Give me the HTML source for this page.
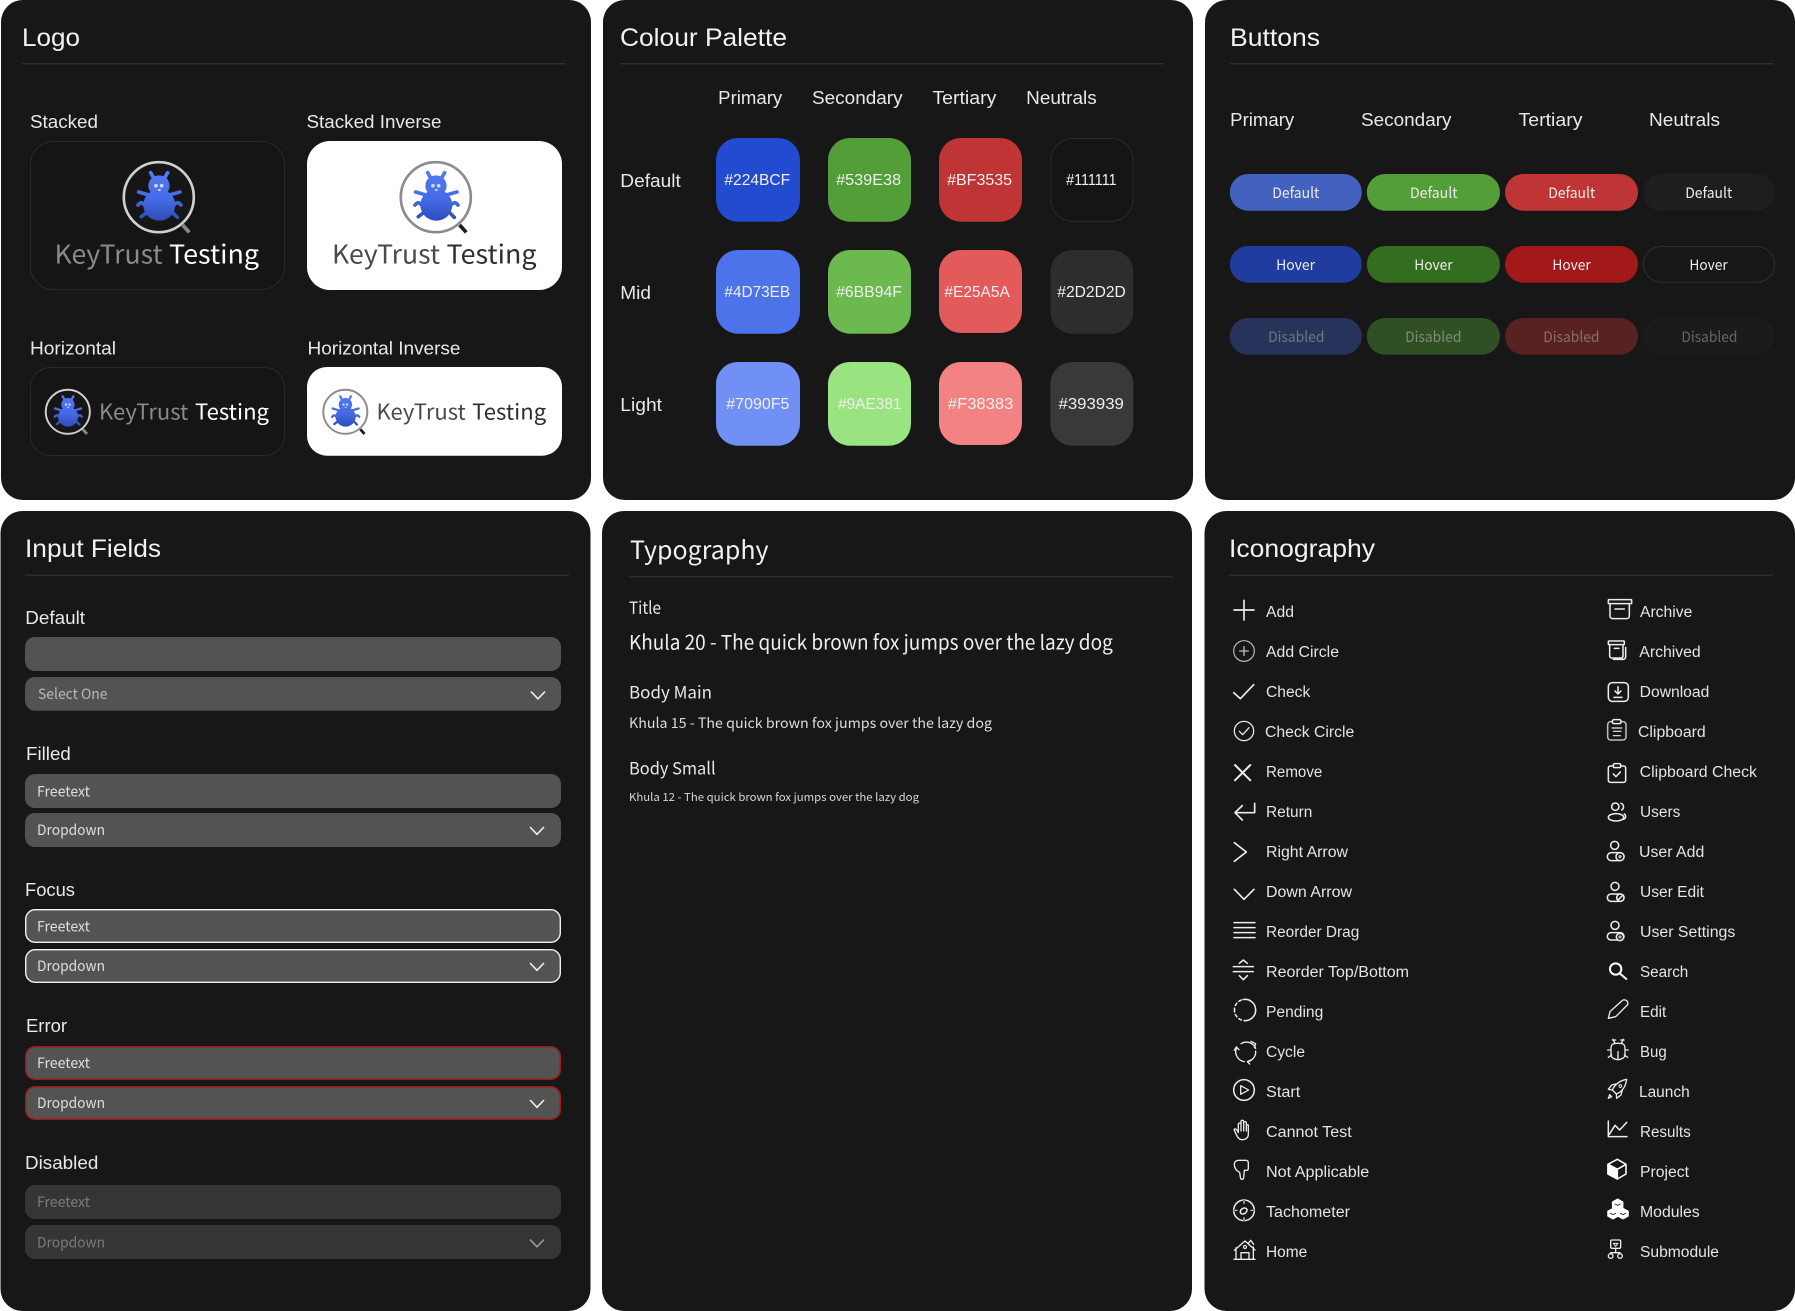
<!DOCTYPE html>
<html lang="en"><head><meta charset="utf-8"><title>KeyTrust Testing Style Guide</title>
<style>
html,body{margin:0;padding:0;background:#fff}
svg{display:block}
text{font-family:"Liberation Sans",sans-serif;fill:#ececec}
.h{font-size:25px;fill:#f2f2f2}
.l{font-size:18px;fill:#e8e8e8}
.sw{font-size:15.5px;fill:#f0f0f0}
.k{font-family:"Noto Sans CJK JP","Liberation Sans",sans-serif}
.b{font-size:14.5px;text-anchor:start}
.f{font-size:14.5px;fill:#dedede}
.d{fill:#7b7b7b}
.n{font-size:15.5px;fill:#e4e4e4}
.ic{fill:none;stroke:#ececec;stroke-width:4.6;stroke-linecap:round;stroke-linejoin:round}
.ch{fill:none;stroke:#eee;stroke-width:1.6}
</style></head><body>
<svg xmlns="http://www.w3.org/2000/svg" width="1795" height="1311" viewBox="0 0 1795 1311">
<defs>
<linearGradient id="g" gradientUnits="userSpaceOnUse" x1="0" y1="70" x2="0" y2="212"><stop offset="0" stop-color="#5079f2"/><stop offset=".55" stop-color="#466ae6"/><stop offset="1" stop-color="#2d4db8"/></linearGradient>
<g id="bug">
<ellipse cx="177" cy="107" rx="32" ry="31" fill="url(#g)"/><ellipse cx="178" cy="165" rx="48" ry="47" fill="url(#g)"/>
<g fill="none" stroke="url(#g)" stroke-width="11" stroke-linecap="round">
<path d="M147 135L116 126M208 135L240 126M132 163C125 155 120 158 114 165M224 163C232 155 238 158 243 165M140 188L124 200M218 188L232 202M163 90C160 80 156 75 152 68M192 90C196 80 198 75 203 68"/></g>
<circle cx="168" cy="107" r="5.5" fill="#cfd8f5"/><circle cx="185" cy="107" r="5.5" fill="#cfd8f5"/><ellipse cx="178" cy="120" rx="4.5" ry="3" fill="#cfd8f5"/>
</g>
</defs>
<rect width="1795" height="1311" fill="#fff"/>
<rect x="1" y="0" width="590" height="500" rx="22" fill="#171717"/>
<rect x="603" y="0" width="590" height="500" rx="22" fill="#171717"/>
<rect x="1205" y="0" width="590" height="500" rx="22" fill="#171717"/>
<rect x="0.5" y="511" width="590" height="800" rx="22" fill="#171717"/>
<rect x="602" y="511" width="590" height="800" rx="22" fill="#171717"/>
<rect x="1204.5" y="511" width="590.5" height="800" rx="22" fill="#171717"/>

<!-- dividers -->
<g fill="#2d2d2d"><rect x="22" y="63" width="544" height="1.5"/><rect x="620" y="63" width="544" height="1.5"/><rect x="1230" y="63" width="544" height="1.5"/><rect x="25" y="574.5" width="544" height="1.5"/><rect x="629" y="576" width="544" height="1.5"/><rect x="1229" y="574.5" width="544" height="1.5"/></g>

<!-- titles -->
<text class="h" x="22" y="46" textLength="58" lengthAdjust="spacingAndGlyphs">Logo</text>
<text class="h" x="620" y="46" textLength="167" lengthAdjust="spacingAndGlyphs">Colour Palette</text>
<text class="h" x="1230" y="46" textLength="90" lengthAdjust="spacingAndGlyphs">Buttons</text>
<text class="h" x="25" y="557" textLength="136" lengthAdjust="spacingAndGlyphs">Input Fields</text>
<text class="h k" x="630" y="559" textLength="138.5" lengthAdjust="spacingAndGlyphs">Typography</text>
<text class="h" x="1229" y="557" textLength="146" lengthAdjust="spacingAndGlyphs">Iconography</text>

<!-- logo panel -->
<text class="l" x="30" y="128" textLength="68" lengthAdjust="spacingAndGlyphs">Stacked</text>
<text class="l" x="306.5" y="128" textLength="135" lengthAdjust="spacingAndGlyphs">Stacked Inverse</text>
<text class="l" x="30" y="354.4" textLength="86" lengthAdjust="spacingAndGlyphs">Horizontal</text>
<text class="l" x="307.5" y="354.4" textLength="153" lengthAdjust="spacingAndGlyphs">Horizontal Inverse</text>
<rect x="30.5" y="141.5" width="254" height="148" rx="23" fill="#151515" stroke="#292929"/>
<rect x="307" y="141" width="255" height="149" rx="23" fill="#fff"/>
<rect x="30.5" y="367.5" width="254" height="88" rx="20" fill="#151515" stroke="#292929"/>
<rect x="307" y="367" width="255" height="88.7" rx="20" fill="#fff"/>

<g transform="translate(158.8 197.2) scale(.3333) translate(-176.5 -141.5)"><path d="M248 225L268 247" stroke="#8a8a8a" stroke-width="11" fill="none"/><circle cx="176.5" cy="141.5" r="105" fill="#161616" stroke="#cfcfcf" stroke-width="8"/><use href="#bug"/></g>
<g transform="translate(435.8 197.2) scale(.3333) translate(-176.5 -141.5)"><path d="M248 225L268 247" stroke="#1d1d1d" stroke-width="11" fill="none"/><circle cx="176.5" cy="141.5" r="105" fill="#fff" stroke="#8c8c8c" stroke-width="8"/><use href="#bug"/></g>
<g transform="translate(67.8 411.8) scale(.21) translate(-176.5 -141.5)"><path d="M248 225L268 247" stroke="#8a8a8a" stroke-width="13" fill="none"/><circle cx="176.5" cy="141.5" r="105" fill="#161616" stroke="#cfcfcf" stroke-width="9"/><use href="#bug"/></g>
<g transform="translate(345.3 411.8) scale(.21) translate(-176.5 -141.5)"><path d="M248 225L268 247" stroke="#1d1d1d" stroke-width="13" fill="none"/><circle cx="176.5" cy="141.5" r="105" fill="#fff" stroke="#8c8c8c" stroke-width="9"/><use href="#bug"/></g>

<g>
<text class="k" x="54.5" y="263.5" font-size="26" style="fill:#8a8a8a" textLength="108" lengthAdjust="spacingAndGlyphs">KeyTrust</text>
<text class="k" x="169" y="263.5" font-size="26" style="fill:#fff" textLength="90" lengthAdjust="spacingAndGlyphs">Testing</text>
<text class="k" x="332" y="263.5" font-size="26" style="fill:#4a4a4a" textLength="108" lengthAdjust="spacingAndGlyphs">KeyTrust</text>
<text class="k" x="446.5" y="263.5" font-size="26" style="fill:#2e2e2e" textLength="90" lengthAdjust="spacingAndGlyphs">Testing</text>
<text class="k" x="99" y="419.3" font-size="21.5" style="fill:#8a8a8a" textLength="89.3" lengthAdjust="spacingAndGlyphs">KeyTrust</text>
<text class="k" x="195" y="419.3" font-size="21.5" style="fill:#fff" textLength="74" lengthAdjust="spacingAndGlyphs">Testing</text>
<text class="k" x="376.5" y="419.3" font-size="21.5" style="fill:#4a4a4a" textLength="89.3" lengthAdjust="spacingAndGlyphs">KeyTrust</text>
<text class="k" x="472.2" y="419.3" font-size="21.5" style="fill:#2e2e2e" textLength="74" lengthAdjust="spacingAndGlyphs">Testing</text>
</g>

<!-- palette -->
<text class="l" x="718.2" y="104" textLength="64" lengthAdjust="spacingAndGlyphs">Primary</text>
<text class="l" x="812" y="104" textLength="90.6" lengthAdjust="spacingAndGlyphs">Secondary</text>
<text class="l" x="932.4" y="104" textLength="64" lengthAdjust="spacingAndGlyphs">Tertiary</text>
<text class="l" x="1026.2" y="104" textLength="70.5" lengthAdjust="spacingAndGlyphs">Neutrals</text>
<text class="l" x="620.3" y="187" textLength="60.5" lengthAdjust="spacingAndGlyphs">Default</text>
<text class="l" x="620.3" y="299" textLength="30.7" lengthAdjust="spacingAndGlyphs">Mid</text>
<text class="l" x="620.3" y="411" textLength="41.7" lengthAdjust="spacingAndGlyphs">Light</text>

<rect x="716" y="138" width="84" height="83.7" rx="22" fill="#224BCF"/>
<rect x="828" y="138" width="83" height="83.7" rx="22" fill="#539E38"/>
<rect x="939" y="138" width="83" height="83.7" rx="22" fill="#BF3535"/>
<rect x="1050.9" y="138.5" width="82" height="82.7" rx="22" fill="#151515" stroke="#2a2a2a"/>
<rect x="716" y="250" width="84" height="83.7" rx="22" fill="#4D73EB"/>
<rect x="828" y="250" width="83" height="83.7" rx="22" fill="#6BB94F"/>
<rect x="939" y="250" width="83" height="83" rx="22" fill="#E25A5A"/>
<rect x="1050.4" y="250" width="83" height="83.7" rx="22" fill="#2D2D2D"/>
<rect x="716" y="362" width="84" height="83.7" rx="22" fill="#7090F5"/>
<rect x="828" y="362" width="83" height="83.7" rx="22" fill="#9AE381"/>
<rect x="939" y="362" width="83" height="83" rx="22" fill="#F38383"/>
<rect x="1050.4" y="362" width="83" height="83.7" rx="22" fill="#393939"/>

<text class="sw" x="724.4" y="185" textLength="65.8" lengthAdjust="spacingAndGlyphs">#224BCF</text>
<text class="sw" x="836.1" y="185" textLength="65" lengthAdjust="spacingAndGlyphs">#539E38</text>
<text class="sw" x="947.1" y="185" textLength="65" lengthAdjust="spacingAndGlyphs">#BF3535</text>
<text class="sw" x="1066.1" y="185" textLength="50.5" lengthAdjust="spacingAndGlyphs">#111111</text>
<text class="sw" x="724.4" y="297" textLength="65.8" lengthAdjust="spacingAndGlyphs">#4D73EB</text>
<text class="sw" x="836.1" y="297" textLength="65.8" lengthAdjust="spacingAndGlyphs">#6BB94F</text>
<text class="sw" x="944.4" y="297" textLength="65.4" lengthAdjust="spacingAndGlyphs">#E25A5A</text>
<text class="sw" x="1057.3" y="297" textLength="68.5" lengthAdjust="spacingAndGlyphs">#2D2D2D</text>
<text class="sw" x="726.3" y="409" textLength="63.1" lengthAdjust="spacingAndGlyphs">#7090F5</text>
<text class="sw" x="838" y="409" textLength="63.5" lengthAdjust="spacingAndGlyphs">#9AE381</text>
<text class="sw" x="947.9" y="409" textLength="65.4" lengthAdjust="spacingAndGlyphs">#F38383</text>
<text class="sw" x="1058.5" y="409" textLength="65.4" lengthAdjust="spacingAndGlyphs">#393939</text>

<!-- buttons -->
<text class="l" x="1230.2" y="126" textLength="64" lengthAdjust="spacingAndGlyphs">Primary</text>
<text class="l" x="1361" y="126" textLength="90.5" lengthAdjust="spacingAndGlyphs">Secondary</text>
<text class="l" x="1518.5" y="126" textLength="64" lengthAdjust="spacingAndGlyphs">Tertiary</text>
<text class="l" x="1649" y="126" textLength="71" lengthAdjust="spacingAndGlyphs">Neutrals</text>

<rect x="1229.8" y="174" width="132" height="36.7" rx="18.3" fill="#4361BF"/>
<rect x="1366.8" y="174" width="133.2" height="36.7" rx="18.3" fill="#539E38"/>
<rect x="1505" y="174" width="133" height="36.7" rx="18.3" fill="#BF3535"/>
<rect x="1643" y="174" width="132" height="36.7" rx="18.3" fill="#1E1E1E"/>
<rect x="1229.8" y="246" width="132" height="36.7" rx="18.3" fill="#1F3C9E"/>
<rect x="1366.8" y="246" width="133.2" height="36.7" rx="18.3" fill="#336E20"/>
<rect x="1505" y="246" width="133" height="36.7" rx="18.3" fill="#A31818"/>
<rect x="1643.5" y="246.5" width="131" height="35.7" rx="17.8" fill="none" stroke="#2f2f2f"/>
<rect x="1229.8" y="318" width="132" height="36.7" rx="18.3" fill="#27335B"/>
<rect x="1366.8" y="318" width="133.2" height="36.7" rx="18.3" fill="#2F4F25"/>
<rect x="1505" y="318" width="133" height="36.7" rx="18.3" fill="#582222"/>
<rect x="1643" y="318" width="132" height="36.7" rx="18.3" fill="#1B1B1B"/>

<g>
<text class="b k" x="1272.3" y="198" textLength="47" lengthAdjust="spacingAndGlyphs">Default</text>
<text class="b k" x="1410" y="198" textLength="47.5" lengthAdjust="spacingAndGlyphs">Default</text>
<text class="b k" x="1548.2" y="198" textLength="47" lengthAdjust="spacingAndGlyphs">Default</text>
<text class="b k" x="1685.2" y="198" textLength="47" lengthAdjust="spacingAndGlyphs">Default</text>
<text class="b k" x="1276.1" y="270" textLength="39" lengthAdjust="spacingAndGlyphs">Hover</text>
<text class="b k" x="1414.3" y="270" textLength="38.3" lengthAdjust="spacingAndGlyphs">Hover</text>
<text class="b k" x="1552.4" y="270" textLength="38.3" lengthAdjust="spacingAndGlyphs">Hover</text>
<text class="b k" x="1689.4" y="270" textLength="38.3" lengthAdjust="spacingAndGlyphs">Hover</text>
<text class="b k" x="1268.1" y="342" style="fill:#72767f" textLength="56.3" lengthAdjust="spacingAndGlyphs">Disabled</text>
<text class="b k" x="1405.1" y="342" style="fill:#7d8c78" textLength="56.3" lengthAdjust="spacingAndGlyphs">Disabled</text>
<text class="b k" x="1543.2" y="342" style="fill:#8a6d6d" textLength="56.3" lengthAdjust="spacingAndGlyphs">Disabled</text>
<text class="b k" x="1681.4" y="342" style="fill:#666" textLength="56" lengthAdjust="spacingAndGlyphs">Disabled</text>
</g>

<!-- inputs -->
<text class="l" x="25.3" y="624" textLength="59.7" lengthAdjust="spacingAndGlyphs">Default</text>
<text class="l" x="26" y="760" textLength="44.8" lengthAdjust="spacingAndGlyphs">Filled</text>
<text class="l" x="25" y="896.2" textLength="50" lengthAdjust="spacingAndGlyphs">Focus</text>
<text class="l" x="26" y="1032" textLength="41" lengthAdjust="spacingAndGlyphs">Error</text>
<text class="l" x="25" y="1169" textLength="73.3" lengthAdjust="spacingAndGlyphs">Disabled</text>

<g fill="#535353">
<rect x="25" y="637" width="536" height="34" rx="10"/>
<rect x="25" y="677" width="536" height="33.7" rx="10"/>
<rect x="25" y="774" width="536" height="34" rx="10"/>
<rect x="25" y="813" width="536" height="34" rx="10"/>
<rect x="25.7" y="909.7" width="534.6" height="32.6" rx="9.5" stroke="#f0f0f0" stroke-width="1.4"/>
<rect x="25.7" y="949.7" width="534.6" height="32.6" rx="9.5" stroke="#f0f0f0" stroke-width="1.4"/>
<rect x="25.7" y="1046.7" width="534.6" height="32.6" rx="9.5" stroke="#a31818" stroke-width="1.4"/>
<rect x="25.7" y="1086.7" width="534.6" height="32.6" rx="9.5" stroke="#a31818" stroke-width="1.4"/>
</g>
<rect x="25" y="1185" width="536" height="34" rx="10" fill="#353535"/>
<rect x="25" y="1225" width="536" height="34" rx="10" fill="#353535"/>

<text class="f k" x="38" y="699" style="fill:#b8b8b8" textLength="69.5" lengthAdjust="spacingAndGlyphs">Select One</text>
<text class="f k" x="37" y="796.5" textLength="53" lengthAdjust="spacingAndGlyphs">Freetext</text>
<text class="f k" x="37" y="835" textLength="68" lengthAdjust="spacingAndGlyphs">Dropdown</text>
<text class="f k" x="37" y="931.5" textLength="53" lengthAdjust="spacingAndGlyphs">Freetext</text>
<text class="f k" x="37" y="971" textLength="68" lengthAdjust="spacingAndGlyphs">Dropdown</text>
<text class="f k" x="37" y="1068" textLength="53" lengthAdjust="spacingAndGlyphs">Freetext</text>
<text class="f k" x="37" y="1108" textLength="68" lengthAdjust="spacingAndGlyphs">Dropdown</text>
<text class="f k d" x="37" y="1207" style="fill:#7b7b7b" textLength="53" lengthAdjust="spacingAndGlyphs">Freetext</text>
<text class="f k d" x="37" y="1247.5" style="fill:#7b7b7b" textLength="68" lengthAdjust="spacingAndGlyphs">Dropdown</text>

<path class="ch" d="M531 691.6L538 698.8L545 691.6"/>
<path class="ch" d="M530 827L537 834.3L544 827"/>
<path class="ch" d="M530 963L537 970.3L544 963"/>
<path class="ch" d="M530 1100L537 1107.3L544 1100"/>
<path class="ch" style="stroke:#9a9a9a" d="M530 1239.5L537 1246.8L544 1239.5"/>

<!-- typography -->
<text class="k" x="629" y="614" font-size="17" style="fill:#e8e8e8" textLength="32" lengthAdjust="spacingAndGlyphs">Title</text>
<text class="k" x="629" y="649.5" font-size="20" style="fill:#eee" textLength="483.8" lengthAdjust="spacingAndGlyphs">Khula 20 - The quick brown fox jumps over the lazy dog</text>
<text class="k" x="629" y="698.3" font-size="17" style="fill:#e8e8e8" textLength="83" lengthAdjust="spacingAndGlyphs">Body Main</text>
<text class="k" x="629" y="728" font-size="14" style="fill:#dcdcdc" textLength="363" lengthAdjust="spacingAndGlyphs">Khula 15 - The quick brown fox jumps over the lazy dog</text>
<text class="k" x="629" y="774.3" font-size="17" style="fill:#e8e8e8" textLength="86.6" lengthAdjust="spacingAndGlyphs">Body Small</text>
<text class="k" x="629" y="801" font-size="11" style="fill:#d8d8d8" textLength="290" lengthAdjust="spacingAndGlyphs">Khula 12 - The quick brown fox jumps over the lazy dog</text>

<!-- icon labels left -->
<g>
<text class="n" x="1266" y="616.8" textLength="28" lengthAdjust="spacingAndGlyphs">Add</text>
<text class="n" x="1266" y="656.8" textLength="73" lengthAdjust="spacingAndGlyphs">Add Circle</text>
<text class="n" x="1266" y="696.8" textLength="44.3" lengthAdjust="spacingAndGlyphs">Check</text>
<text class="n" x="1265" y="736.8" textLength="89.3" lengthAdjust="spacingAndGlyphs">Check Circle</text>
<text class="n" x="1266" y="776.8" textLength="56.3" lengthAdjust="spacingAndGlyphs">Remove</text>
<text class="n" x="1266" y="816.8" textLength="46.3" lengthAdjust="spacingAndGlyphs">Return</text>
<text class="n" x="1266" y="856.8" textLength="82" lengthAdjust="spacingAndGlyphs">Right Arrow</text>
<text class="n" x="1266" y="896.8" textLength="86" lengthAdjust="spacingAndGlyphs">Down Arrow</text>
<text class="n" x="1266" y="936.8" textLength="93.3" lengthAdjust="spacingAndGlyphs">Reorder Drag</text>
<text class="n" x="1266" y="976.8" textLength="143" lengthAdjust="spacingAndGlyphs">Reorder Top/Bottom</text>
<text class="n" x="1266" y="1016.8" textLength="57.3" lengthAdjust="spacingAndGlyphs">Pending</text>
<text class="n" x="1266" y="1056.8" textLength="39" lengthAdjust="spacingAndGlyphs">Cycle</text>
<text class="n" x="1266" y="1096.8" textLength="34.3" lengthAdjust="spacingAndGlyphs">Start</text>
<text class="n" x="1266" y="1136.8" textLength="85.7" lengthAdjust="spacingAndGlyphs">Cannot Test</text>
<text class="n" x="1266" y="1176.8" textLength="103.3" lengthAdjust="spacingAndGlyphs">Not Applicable</text>
<text class="n" x="1266" y="1216.8" textLength="84" lengthAdjust="spacingAndGlyphs">Tachometer</text>
<text class="n" x="1266" y="1256.8" textLength="41.3" lengthAdjust="spacingAndGlyphs">Home</text>
</g>
<!-- icon labels right -->
<g>
<text class="n" x="1640" y="616.8" textLength="52.3" lengthAdjust="spacingAndGlyphs">Archive</text>
<text class="n" x="1639.3" y="656.8" textLength="61.4" lengthAdjust="spacingAndGlyphs">Archived</text>
<text class="n" x="1639.7" y="696.8" textLength="69.6" lengthAdjust="spacingAndGlyphs">Download</text>
<text class="n" x="1638" y="736.8" textLength="67.7" lengthAdjust="spacingAndGlyphs">Clipboard</text>
<text class="n" x="1639.7" y="776.8" textLength="117.3" lengthAdjust="spacingAndGlyphs">Clipboard Check</text>
<text class="n" x="1640" y="816.8" textLength="40.3" lengthAdjust="spacingAndGlyphs">Users</text>
<text class="n" x="1639" y="856.8" textLength="65.3" lengthAdjust="spacingAndGlyphs">User Add</text>
<text class="n" x="1640" y="896.8" textLength="64" lengthAdjust="spacingAndGlyphs">User Edit</text>
<text class="n" x="1640" y="936.8" textLength="95.3" lengthAdjust="spacingAndGlyphs">User Settings</text>
<text class="n" x="1640" y="976.8" textLength="48.3" lengthAdjust="spacingAndGlyphs">Search</text>
<text class="n" x="1640" y="1016.8" textLength="26.3" lengthAdjust="spacingAndGlyphs">Edit</text>
<text class="n" x="1640" y="1056.8" textLength="26.7" lengthAdjust="spacingAndGlyphs">Bug</text>
<text class="n" x="1639" y="1096.8" textLength="50.7" lengthAdjust="spacingAndGlyphs">Launch</text>
<text class="n" x="1640" y="1136.8" textLength="50.7" lengthAdjust="spacingAndGlyphs">Results</text>
<text class="n" x="1640" y="1176.8" textLength="49" lengthAdjust="spacingAndGlyphs">Project</text>
<text class="n" x="1640" y="1216.8" textLength="59.7" lengthAdjust="spacingAndGlyphs">Modules</text>
<text class="n" x="1640" y="1256.8" textLength="79" lengthAdjust="spacingAndGlyphs">Submodule</text>
</g>

<!-- icons left top -->
<g class="ic" transform="translate(1205 591) scale(.33333)">
<path d="M117 28V87M87 57H147" stroke-width="5"/>
<circle cx="117" cy="180" r="31" stroke="#bdbdbd" stroke-width="3.5"/><path d="M117 167V193M104 180H130" stroke="#bdbdbd" stroke-width="4"/>
<path d="M86 305L106 323L146 281" stroke-width="5"/>
<circle cx="117" cy="420" r="29" stroke-width="3.8"/><path d="M103 421L113 431L132 410" stroke-width="3.8"/>
<path d="M90 522L136 568M136 522L90 568" stroke-width="6"/>
<path d="M149 637V665H90M112 644L90 665L112 687" stroke-width="5"/>
<path d="M88 755L124 783L88 811" stroke-width="5"/>
<path d="M88 895L117 925L147 895" stroke-width="5"/>
<path d="M87 995H150M87 1010H150M87 1025H150M87 1040H150"/>
</g>
<!-- icons left bottom -->
<g class="ic" transform="translate(1205 951) scale(.33333)">
<path d="M85 47H145M85 62H145M103 37L115 27L127 37M103 74L115 86L127 74"/>
<path d="M114.4 145.5A32 32 0 1 1 117.2 208.9M109 207L101.6 203.2M95.5 197.6L91 190.5M88.5 182.6V171.4M91 163.5L95.5 156.4M101.6 150.8L109 147"/>
<path d="M108 278A30 30 0 0 1 152 292M138 271L152 278L148 290M152 300A30 30 0 0 1 128 332M140 326L127 332L134 339M118 332A30 30 0 0 1 94 292M88 298L94 288L102 296" stroke-width="4"/>
<circle cx="117" cy="417" r="31"/><path d="M107 404L131 417L107 430Z" stroke-width="3.8"/>
<path d="M100 545V520a4 4 0 0 1 8 0V512a4 4 0 0 1 8 0V516a4 4 0 0 1 8 0V524a3 3 0 0 1 6 0V550C130 560 122 566 112 566C100 566 96 556 88 538C86 532 94 530 100 545M108 520V540M116 516V540M124 520V540" stroke-width="4"/>
<path d="M88 640C88 632 94 628 102 628H122C126 628 130 630 130 636V652C130 656 128 658 124 658H118L116 680C115 688 106 686 106 678L104 664C96 660 88 652 88 640Z" stroke-width="4"/>
<circle cx="117" cy="778" r="31" stroke-width="4.6"/><ellipse cx="116" cy="780" rx="11" ry="8" transform="rotate(-35 116 780)"/><path d="M117 747V756M86 778H94M140 778H148M117 800V809" stroke="#171717" stroke-width="5" stroke-linecap="butt"/><path d="M117 750V757M90 778H96M138 778H144M117 800V806" stroke-width="3.5"/>
<path d="M87 925H150M93 925V890M145 925V888M88 898L120 870L150 897M108 925V905H132V925M130 877L137 868L146 880" stroke-width="4"/><circle cx="120" cy="888" r="4.5" stroke-width="3.5"/>
</g>
<!-- icons right top -->
<g class="ic" transform="translate(1585 590) scale(.33333)">
<rect x="70" y="29" width="70" height="12" rx="2"/><path d="M75 41V78a8 8 0 0 0 8 8H125a8 8 0 0 0 8-8V41M90 57H118"/>
<rect x="70" y="153" width="48" height="11" rx="2"/><path d="M74 164V198a6 6 0 0 0 6 6H108a6 6 0 0 0 6-6V164M88 175H102M122 172V200a8 8 0 0 1-8 8H85"/>
<rect x="70" y="278" width="60" height="56" rx="12"/><path d="M99 290V310M90 303L99 312L108 303M87 322H111"/>
<rect x="68" y="395" width="55" height="55" rx="9" stroke="#bdbdbd"/><rect x="82" y="389" width="26" height="12" rx="5" fill="#171717"/><path d="M81 414H110M85 424H108M85 437H106" stroke-width="3.5"/>
<rect x="70" y="528" width="52" height="49" rx="6"/><rect x="85" y="521" width="22" height="12" rx="4" fill="#171717"/><path d="M85 552L93 560L106 546"/>
<circle cx="91" cy="650" r="11"/><ellipse cx="93" cy="682" rx="23" ry="11"/><path d="M108 640a11 11 0 0 1 2 20M118 672a12 10 0 0 1-2 16"/>
<circle cx="89" cy="766" r="12"/><rect x="67" y="788" width="50" height="24" rx="12"/><circle cx="105" cy="800" r="12" fill="#171717"/><circle cx="105" cy="800" r="5" fill="#bbb" stroke="none"/>
<circle cx="90" cy="889" r="12"/><rect x="67" y="912" width="50" height="22" rx="11"/><circle cx="106" cy="923" r="11" fill="#171717"/><path d="M100 929L112 917"/>
<circle cx="90" cy="1006" r="12"/><rect x="67" y="1028" width="50" height="22" rx="11"/><circle cx="105" cy="1041" r="11" fill="#171717"/><circle cx="105" cy="1041" r="5" fill="#bbb" stroke="none"/>
</g>
<!-- icons right bottom -->
<g class="ic" transform="translate(1585 950) scale(.33333)">
<circle cx="92" cy="57" r="17" stroke-width="6" stroke="#fff"/><path d="M105 71L124 87" stroke-width="6" stroke="#fff"/>
<path d="M70 205L75 185L110 153C113 150 116 148 120 150C127 150 131 160 127 165L92 200Z" stroke-width="4"/>
<path d="M78 295C78 280 88 280 99 280S120 280 120 295V315C120 322 110 329 99 329S78 322 78 315ZM99 305V325M84 268L90 280M115 268L109 280M68 300H78M120 300H130M70 322L80 315M128 322L118 315M82 270H92M107 270H117" stroke-width="4"/>
<path d="M125 388C105 392 90 402 82 420L94 432C112 425 122 410 125 388ZM82 420L70 418L80 405L92 402M94 432L95 445L108 435L112 420M70 445L74 434L80 440Z" stroke-width="4"/><circle cx="106" cy="408" r="4" stroke-width="3"/>
<path d="M70 513V560H126M73 553L90 526L104 540L125 517"/>
<path d="M69 643L97 658V687L69 672Z" fill="#fff" stroke="#fff"/><path d="M97 628L123 643V672L97 687L69 672V643ZM69 643L97 658L123 643" stroke="#fff"/>
<path d="M98 748L113 756V772L98 780L83 772V756ZM84 776L99 784V798L84 806L69 798V784ZM114 776L129 784V798L114 806L99 798V784Z" fill="#fff" stroke="#fff"/><path d="M90 762L98 766L106 762M76 790L84 794L92 790M106 790L114 794L122 790" stroke="#171717" stroke-width="2.5"/>
<rect x="77" y="870" width="30" height="25" rx="4" stroke-width="4"/><path d="M85 880H99L92 889Z" stroke-width="3"/><path d="M92 895V908M77 911V908H105V911" stroke-width="4"/><circle cx="77" cy="918" r="7" stroke-width="4"/><circle cx="105" cy="918" r="7" stroke-width="4"/>
</g>
</svg>
</body></html>
